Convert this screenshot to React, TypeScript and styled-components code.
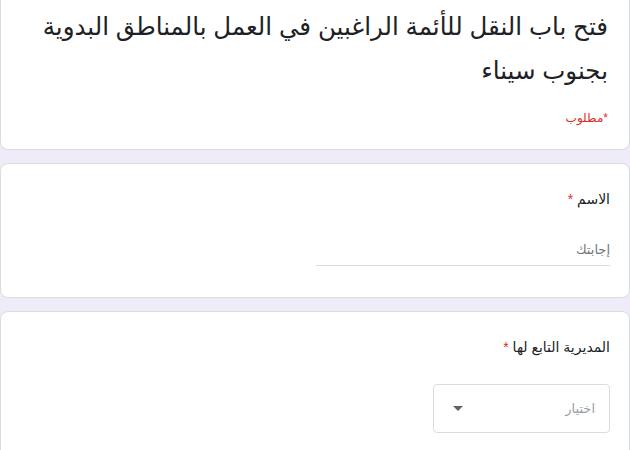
import * as React from 'react';
import styled, { createGlobalStyle } from 'styled-components';

const GlobalStyle = createGlobalStyle`
    html, body {
        margin: 0;
        padding: 0;
        background: #f0ebf8;
    }
    body {
        font-family: Arial, "Liberation Sans", "DejaVu Sans", sans-serif;
    }
`;

const Page = styled.div`
    direction: rtl;
    display: flex;
    flex-direction: column;
    gap: 13px;
    width: 630px;
    height: 450px;
    overflow: hidden;
    background: #f0ebf8;
`;

const Card = styled.div<{ $pad: string; $top?: boolean }>`
    background: #fff;
    border: 1px solid #dadce0;
    border-radius: ${(p) => (p.$top ? '0 0 8px 8px' : '8px')};
    border-top-width: ${(p) => (p.$top ? '0' : '1px')};
    padding: ${(p) => p.$pad};
    flex-shrink: 0;
`;

const Title = styled.h1`
    margin: 0;
    font-size: 24.5px;
    font-weight: 400;
    line-height: 44px;
    color: #202124;
    letter-spacing: -0.2px;
`;

const Required = styled.div`
    margin-top: 18px;
    font-size: 12px;
    line-height: 14px;
    color: #d93025;
`;

const Label = styled.div`
    font-size: 14px;
    color: #202124;
    line-height: 20px;
`;

const Star = styled.span`
    color: #d93025;
    margin-right: 4px;
`;

const TextInput = styled.div`
    margin-top: 33px;
    width: 294px;
    border-bottom: 1px solid #dadce0;
    padding-bottom: 8px;
    font-size: 13px;
    color: #70757a;
`;

const Select = styled.div`
    margin-top: 27px;
    width: 177px;
    height: 49px;
    border: 1px solid #dadce0;
    border-radius: 4px;
    display: flex;
    align-items: center;
    justify-content: space-between;
    padding: 0 14px 0 19px;
    box-sizing: border-box;
    font-size: 13px;
    color: #9aa0a6;
`;

const Arrow = styled.span`
    width: 0;
    height: 0;
    border-left: 5px solid transparent;
    border-right: 5px solid transparent;
    border-top: 5px solid #5f6368;
`;

const App: React.FC = () => {
    return (
        <>
            <GlobalStyle />
            <Page>
                <Card $top $pad="5px 21px 24px 21px">
                    <Title>فتح باب النقل للأئمة الراغبين في العمل بالمناطق البدوية بجنوب سيناء</Title>
                    <Required>*مطلوب</Required>
                </Card>
                <Card $pad="25px 19px 31px 19px">
                    <Label>الاسم<Star>*</Star></Label>
                    <TextInput>إجابتك</TextInput>
                </Card>
                <Card $pad="25px 19px 30px 19px">
                    <Label>المديرية التابع لها<Star>*</Star></Label>
                    <Select>
                        <span>اختيار</span>
                        <Arrow />
                    </Select>
                </Card>
            </Page>
        </>
    );
};

export default App;
